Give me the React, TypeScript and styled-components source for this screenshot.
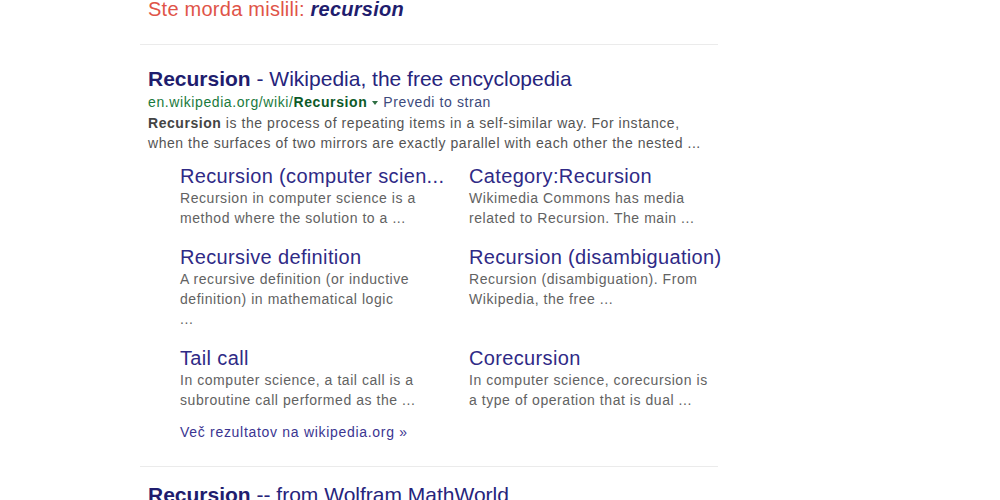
import styled, { createGlobalStyle } from "styled-components"

const GlobalStyle = createGlobalStyle`
  body {
    margin: 0;
    background: #fff;
    font-family: Arial, "Liberation Sans", sans-serif;
  }
`

const sitelinks = [
  { title: "Recursion (computer scien...", desc: ["Recursion in computer science is a", "method where the solution to a ..."] },
  { title: "Category:Recursion", desc: ["Wikimedia Commons has media", "related to Recursion. The main ..."] },
  { title: "Recursive definition", desc: ["A recursive definition (or inductive", "definition) in mathematical logic", "..."] },
  { title: "Recursion (disambiguation)", desc: ["Recursion (disambiguation). From", "Wikipedia, the free ..."] },
  { title: "Tail call", desc: ["In computer science, a tail call is a", "subroutine call performed as the ..."] },
  { title: "Corecursion", desc: ["In computer science, corecursion is", "a type of operation that is dual ..."] },
]

const Page = styled.div`
  width: 578px;
  margin-left: 140px;
`

const Spell = styled.p`
  margin: -2px 0 0 8px;
  font-size: 20px;
  line-height: 22px;
  letter-spacing: 0.25px;
  color: #df5448;

  b {
    color: #1f1d6e;
    font-style: italic;
  }
`

const Divider = styled.div<{ top: number }>`
  height: 1px;
  background: #ebebeb;
  margin-top: ${(p) => p.top}px;
`

const Result = styled.div<{ top: number }>`
  padding: ${(p) => p.top}px 0 0 8px;
`

const Title = styled.a`
  display: block;
  font-size: 21px;
  line-height: 24px;
  color: #26247c;
  text-decoration: none;

  b {
    color: #1f1d6e;
  }
`

const Url = styled.div`
  margin-top: 1px;
  font-size: 14px;
  line-height: 21px;
  letter-spacing: 0.6px;
  color: #1a7a3c;

  b {
    color: #0d5a28;
  }
`

const Translate = styled.span`
  color: #3d4a7c;

  &::before {
    content: "";
    display: inline-block;
    margin: 0 5px 2px 5px;
    border-left: 3px solid transparent;
    border-right: 3px solid transparent;
    border-top: 4px solid #2e6e42;
  }
`

const Snippet = styled.div`
  font-size: 14px;
  line-height: 20px;
  letter-spacing: 0.55px;
  color: #545454;

  b {
    color: #444;
  }
`

const Sitelinks = styled.div`
  display: grid;
  grid-template-columns: 270px 260px;
  column-gap: 19px;
  padding: 12px 0 0 32px;
`

const Site = styled.div`
  margin-bottom: 18px;
  min-width: 0;
`

const SiteTitle = styled.a`
  display: block;
  font-size: 20px;
  line-height: 22px;
  letter-spacing: 0.35px;
  color: #2f2a86;
  text-decoration: none;
  white-space: nowrap;
`

const SiteDesc = styled.div`
  margin-top: 1px;
  font-size: 14px;
  line-height: 20px;
  letter-spacing: 0.55px;
  color: #626262;
`

const More = styled.a`
  display: block;
  margin: -6px 0 0 32px;
  font-size: 14px;
  line-height: 20px;
  letter-spacing: 0.7px;
  color: #3b3591;
  text-decoration: none;
`

const App = () => (
  <>
    <GlobalStyle />
    <Page>
      <Spell>
        Ste morda mislili: <b>recursion</b>
      </Spell>
      <Divider top={24} />
      <Result top={22}>
        <Title href="#">
          <b>Recursion</b> - Wikipedia, the free encyclopedia
        </Title>
        <Url>
          en.wikipedia.org/wiki/<b>Recursion</b>
          <Translate>Prevedi to stran</Translate>
        </Url>
        <Snippet>
          <b>Recursion</b> is the process of repeating items in a self-similar way. For instance,
          <br />
          when the surfaces of two mirrors are exactly parallel with each other the nested ...
        </Snippet>
        <Sitelinks>
          {sitelinks.map((s) => (
            <Site key={s.title}>
              <SiteTitle href="#">{s.title}</SiteTitle>
              <SiteDesc>
                {s.desc.map((d) => (
                  <div key={d}>{d}</div>
                ))}
              </SiteDesc>
            </Site>
          ))}
        </Sitelinks>
        <More href="#">Več rezultatov na wikipedia.org »</More>
      </Result>
      <Divider top={24} />
      <Result top={16}>
        <Title href="#">
          <b>Recursion</b> -- from Wolfram MathWorld
        </Title>
      </Result>
    </Page>
  </>
)

export default App
